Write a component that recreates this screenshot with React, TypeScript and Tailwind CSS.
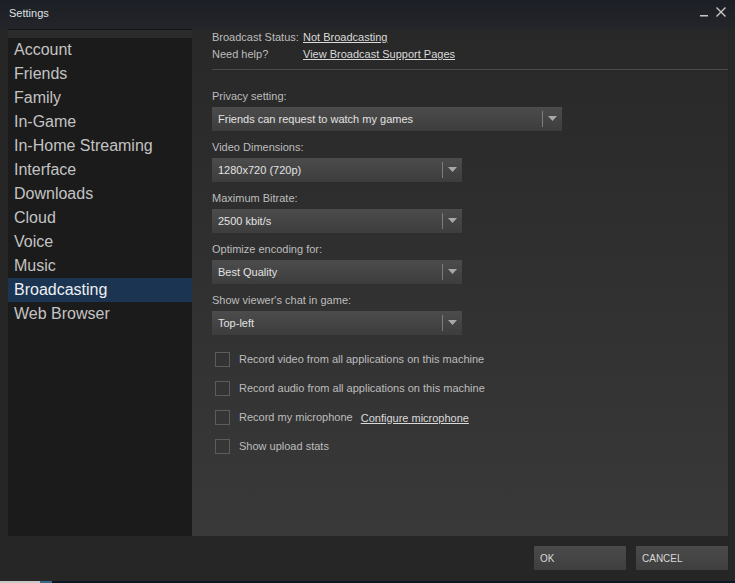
import React from "react";

const navItems = [
  "Account",
  "Friends",
  "Family",
  "In-Game",
  "In-Home Streaming",
  "Interface",
  "Downloads",
  "Cloud",
  "Voice",
  "Music",
  "Broadcasting",
  "Web Browser",
];

const dropdowns = [
  { label: "Privacy setting:", value: "Friends can request to watch my games", wide: true },
  { label: "Video Dimensions:", value: "1280x720 (720p)" },
  { label: "Maximum Bitrate:", value: "2500 kbit/s" },
  { label: "Optimize encoding for:", value: "Best Quality" },
  { label: "Show viewer's chat in game:", value: "Top-left" },
];

function Dropdown({ value, wide }: { value: string; wide?: boolean }) {
  return (
    <div
      className={`flex h-[24px] items-center bg-gradient-to-b from-[#4c4c4c] to-[#3d3d3d] ${
        wide ? "w-[350px]" : "w-[250px]"
      }`}
    >
      <span className="flex-1 truncate pl-[6px] text-[11px] text-[#e2e2e2]">{value}</span>
      <div className="h-[16px] w-px bg-[#7c7c7c]" />
      <div className="flex w-[19px] items-center justify-center">
        <svg width="9" height="6" viewBox="0 0 9 6">
          <polygon points="0,0 9,0 4.5,5" fill="#a8a8a8" />
        </svg>
      </div>
    </div>
  );
}

function Checkbox({ label, children }: { label: string; children?: React.ReactNode }) {
  return (
    <div className="flex h-[29px] items-center">
      <div className="ml-[3px] h-[15px] w-[15px] border border-[#5c5c5c]" />
      <span className="ml-[9px] text-[11px] text-[#bdbdbd]">{label}</span>
      {children}
    </div>
  );
}

export default function App() {
  return (
    <div
      className="flex h-[583px] w-[735px] flex-col bg-[#262626]"
      style={{ fontFamily: '"Liberation Sans", Arial, sans-serif' }}
    >
      {/* title bar */}
      <div className="flex h-[29px] items-start bg-gradient-to-b from-[#1c1f25] to-[#24252a]">
        <span className="ml-[9px] mt-[5px] text-[11px] text-[#dfe1e3]">Settings</span>
        <div className="ml-auto mr-[8px] mt-[6px] flex items-center gap-[6px]">
          <svg width="10" height="12" viewBox="0 0 10 12">
            <rect x="1" y="9" width="8" height="1.5" fill="#c8c8c8" />
          </svg>
          <svg width="12" height="12" viewBox="0 0 12 12">
            <path d="M1.5 1.5 L10.5 10.5 M10.5 1.5 L1.5 10.5" stroke="#c8c8c8" strokeWidth="1.4" />
          </svg>
        </div>
      </div>

      {/* body */}
      <div className="flex h-[507px] pl-[8px] pr-[7px]">
        <div className="flex w-[184px] flex-col border-t border-[#141414] bg-[#1b1b1b]">
          <div className="h-[8px] bg-[#2b2b2b]" />
          {navItems.map((item) => (
            <div
              key={item}
              className={`flex h-[24px] items-center pl-[6px] text-[16px] ${
                item === "Broadcasting" ? "bg-[#1a3452] text-[#eef0f2]" : "text-[#c3c3c3]"
              }`}
            >
              {item}
            </div>
          ))}
        </div>

        <div className="flex-1 bg-gradient-to-b from-[#282828] to-[#393939] pl-[20px]">
          <div className="flex h-[17px] items-center text-[11px]">
            <span className="w-[91px] text-[#bdbdbd]">Broadcast Status:</span>
            <span className="text-[#dadada] underline">Not Broadcasting</span>
          </div>
          <div className="flex h-[17px] items-center text-[11px]">
            <span className="w-[91px] text-[#bdbdbd]">Need help?</span>
            <span className="text-[#dadada] underline">View Broadcast Support Pages</span>
          </div>
          <div className="mt-[6px] h-px bg-[#4a4a4a]" />

          <div className="mt-[19px] flex flex-col gap-[9px]">
            {dropdowns.map((d) => (
              <div key={d.label}>
                <div className="mb-[4px] text-[11px] leading-[14px] text-[#bdbdbd]">{d.label}</div>
                <Dropdown value={d.value} wide={d.wide} />
              </div>
            ))}
          </div>

          <div className="mt-[10px]">
            <Checkbox label="Record video from all applications on this machine" />
            <Checkbox label="Record audio from all applications on this machine" />
            <Checkbox label="Record my microphone">
              <span className="ml-[8px] mt-[1px] text-[11px] text-[#dadada] underline">
                Configure microphone
              </span>
            </Checkbox>
            <Checkbox label="Show upload stats" />
          </div>
        </div>
      </div>

      {/* footer */}
      <div className="flex h-[45px] justify-end gap-[10px] pr-[7px] pt-[10px]">
        <button className="flex h-[24px] w-[92px] items-center bg-gradient-to-b from-[#4a4a4a] to-[#3f3f3f] pl-[6px] text-[10px] text-[#d8d8d8]">
          OK
        </button>
        <button className="flex h-[24px] w-[92px] items-center bg-gradient-to-b from-[#4a4a4a] to-[#3f3f3f] pl-[6px] text-[10px] text-[#d8d8d8]">
          CANCEL
        </button>
      </div>
      <div className="flex h-[2px]">
        <div className="w-[40px] bg-[#c8c8c8]" />
        <div className="w-[12px] bg-[#3a6a8a]" />
        <div className="flex-1 bg-[#0c1722]" />
      </div>
    </div>
  );
}
